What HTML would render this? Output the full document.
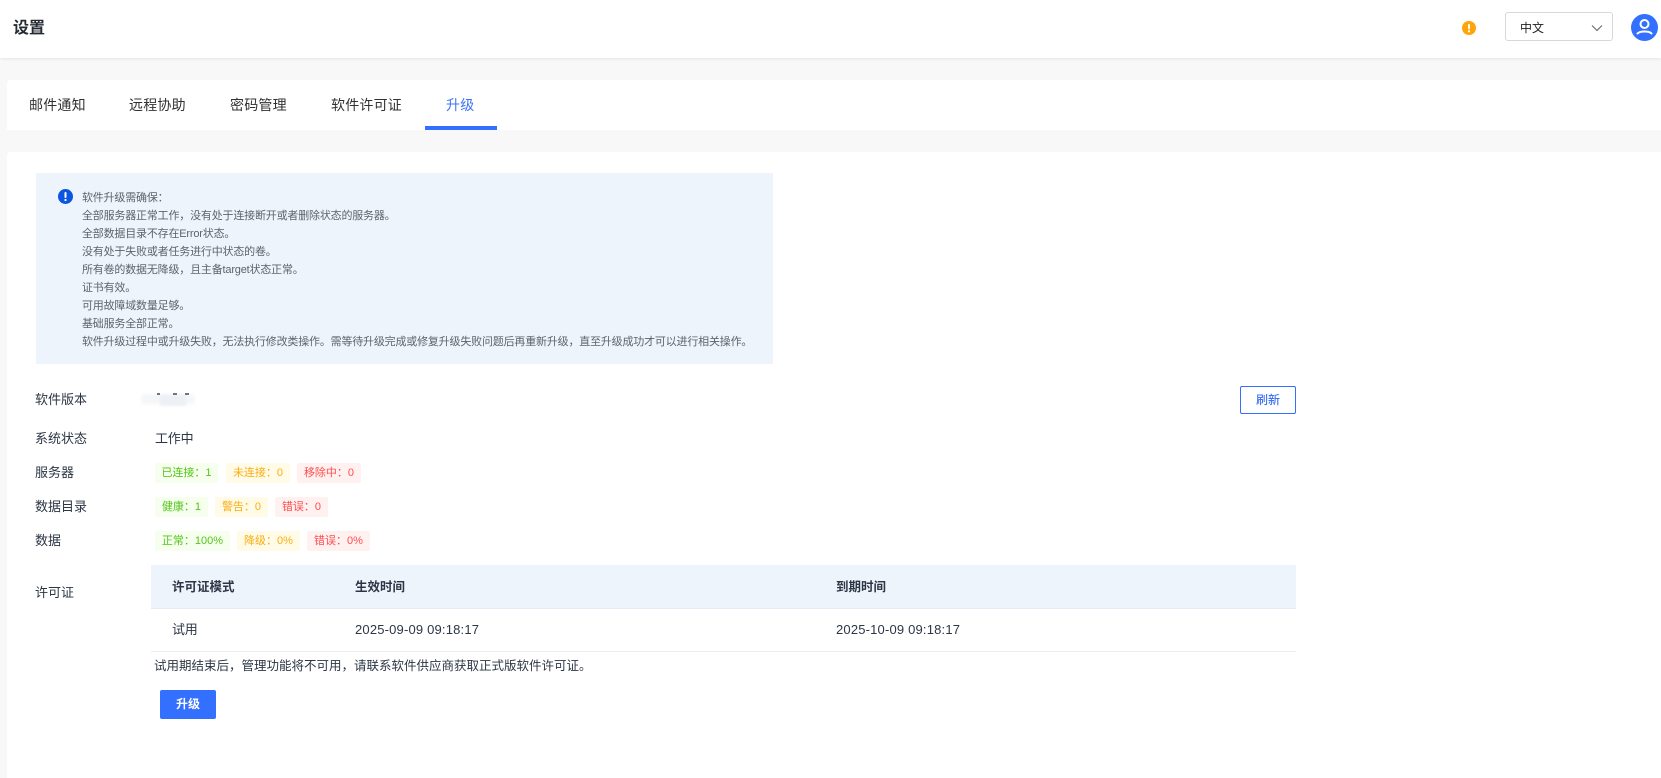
<!DOCTYPE html>
<html lang="zh">
<head>
<meta charset="utf-8">
<title>设置</title>
<style>
*{box-sizing:border-box;margin:0;padding:0}
html,body{width:1661px;height:778px;overflow:hidden;background:#f8f8f8}
body{position:relative;font-family:"Liberation Sans","Noto Sans CJK SC",sans-serif;color:#303133}
.a{position:absolute;white-space:nowrap}
.t{position:absolute;white-space:nowrap;height:20px;line-height:20px;font-size:13px;color:#2c3644}
.tab{position:absolute;white-space:nowrap;top:95px;height:20px;line-height:20px;font-size:14px;letter-spacing:.2px;color:#303133}
.tag{position:absolute;height:20px;line-height:20px;font-size:11px;text-align:center;border-radius:2px;white-space:nowrap}
.g{color:#52c41a;background:#f6ffed}
.o{color:#faad14;background:#fffbe6}
.r{color:#ff4d4f;background:#fff1f0}
.info{position:absolute;left:82px;top:189px;font-size:11px;line-height:18px;letter-spacing:-.19px;color:#5f6368;white-space:nowrap}
.h{font-size:12.5px;font-weight:700}
</style>
</head>
<body>
<div class="a" style="left:0;top:0;width:1661px;height:58px;background:#fff;box-shadow:0 1px 3px rgba(0,0,0,.08)"></div>
<div class="a" style="left:13px;top:18px;font-size:16px;line-height:22px;font-weight:700;color:#252b33">设置</div>
<svg class="a" style="left:1462px;top:21px" width="14" height="14" viewBox="0 0 14 14"><circle cx="7" cy="7" r="7" fill="#ffa40a"/><rect x="6" y="3" width="2" height="5.4" rx="1" fill="#fff"/><circle cx="7" cy="10.3" r="1.1" fill="#fff"/></svg>
<div class="a" style="left:1505px;top:12px;width:108px;height:29px;border:1px solid #d8d8d8;border-radius:3px;background:#fff"></div>
<div class="a" style="left:1520px;top:18px;font-size:12px;line-height:20px;color:#1f1f1f">中文</div>
<svg class="a" style="left:1591px;top:24px" width="12" height="8" viewBox="0 0 12 8"><path d="M1 1.5L6 6.5L11 1.5" fill="none" stroke="#666" stroke-width="1.1"/></svg>
<svg class="a" style="left:1631px;top:14px" width="27" height="27" viewBox="0 0 27 27"><circle cx="13.5" cy="13.5" r="13.5" fill="#3370ff"/><circle cx="13.5" cy="10" r="4" fill="none" stroke="#fff" stroke-width="2"/><path d="M6.5 19.5C9 16.8 18 16.8 20.5 19.5" fill="none" stroke="#fff" stroke-width="2" stroke-linecap="round"/></svg>

<div class="a" style="left:7px;top:80px;width:1654px;height:50px;background:#fff;border-radius:4px 0 0 0"></div>
<div class="tab" style="left:29px">邮件通知</div>
<div class="tab" style="left:129px">远程协助</div>
<div class="tab" style="left:230px">密码管理</div>
<div class="tab" style="left:331px">软件许可证</div>
<div class="tab" style="left:446px;color:#3f74f5">升级</div>
<div class="a" style="left:425px;top:126px;width:72px;height:4px;background:#3370ff"></div>

<div class="a" style="left:7px;top:152px;width:1654px;height:626px;background:#fff;border-radius:4px 0 0 0"></div>
<div class="a" style="left:36px;top:173px;width:737px;height:191px;background:#edf4fc"></div>
<svg class="a" style="left:58px;top:189px" width="15" height="15" viewBox="0 0 15 15"><circle cx="7.5" cy="7.5" r="7.5" fill="#0b55e0"/><rect x="6.5" y="3" width="2" height="6" rx="1" fill="#fff"/><circle cx="7.5" cy="11" r="1.1" fill="#fff"/></svg>
<div class="info">软件升级需确保：<br>全部服务器正常工作，没有处于连接断开或者删除状态的服务器。<br>全部数据目录不存在Error状态。<br>没有处于失败或者任务进行中状态的卷。<br>所有卷的数据无降级，且主备target状态正常。<br>证书有效。<br>可用故障域数量足够。<br>基础服务全部正常。<br>软件升级过程中或升级失败，无法执行修改类操作。需等待升级完成或修复升级失败问题后再重新升级，直至升级成功才可以进行相关操作。</div>

<div class="t" style="left:35px;top:390px">软件版本</div>
<div class="a" style="left:141px;top:394px;width:54px;height:10px;background:#f5f6f8;border-radius:4px;filter:blur(1.5px)"></div>
<div class="a" style="left:160px;top:395px;width:26px;height:11px;background:#eef0f5;filter:blur(1px)"></div>
<div class="a" style="left:157px;top:393px;width:3px;height:2px;background:#6d7483"></div>
<div class="a" style="left:173px;top:393px;width:4px;height:2px;background:#6d7483"></div>
<div class="a" style="left:185px;top:393px;width:4px;height:2px;background:#6d7483"></div>
<div class="a" style="left:1240px;top:386px;width:56px;height:28px;border:1px solid #3370ff;border-radius:2px;background:#fff;color:#3f74f5;font-size:12px;line-height:26px;text-align:center;font-weight:500">刷新</div>

<div class="t" style="left:35px;top:429px">系统状态</div>
<div class="t" style="left:155px;top:429px;letter-spacing:-.2px">工作中</div>

<div class="t" style="left:35px;top:463px">服务器</div>
<div class="tag g" style="left:155px;top:463px;width:63px">已连接：1</div>
<div class="tag o" style="left:226px;top:463px;width:64px">未连接：0</div>
<div class="tag r" style="left:297px;top:463px;width:64px">移除中：0</div>

<div class="t" style="left:35px;top:497px">数据目录</div>
<div class="tag g" style="left:155px;top:497px;width:53px">健康：1</div>
<div class="tag o" style="left:215px;top:497px;width:53px">警告：0</div>
<div class="tag r" style="left:275px;top:497px;width:53px">错误：0</div>

<div class="t" style="left:35px;top:531px">数据</div>
<div class="tag g" style="left:155px;top:531px;width:75px">正常：100%</div>
<div class="tag o" style="left:237px;top:531px;width:63px">降级：0%</div>
<div class="tag r" style="left:307px;top:531px;width:63px">错误：0%</div>

<div class="t" style="left:35px;top:583px">许可证</div>
<div class="a" style="left:151px;top:565px;width:1145px;height:44px;background:#edf4fc;border-bottom:1px solid #e6ebf3"></div>
<div class="t h" style="left:172px;top:577px">许可证模式</div>
<div class="t h" style="left:355px;top:577px">生效时间</div>
<div class="t h" style="left:836px;top:577px">到期时间</div>
<div class="a" style="left:151px;top:651px;width:1145px;height:1px;background:#ebeef5"></div>
<div class="t" style="left:172px;top:620px;letter-spacing:-.2px">试用</div>
<div class="t" style="left:355px;top:620px;letter-spacing:.18px">2025-09-09 09:18:17</div>
<div class="t" style="left:836px;top:620px;letter-spacing:.18px">2025-10-09 09:18:17</div>
<div class="t" style="left:154px;top:656px;font-size:12.5px">试用期结束后，管理功能将不可用，请联系软件供应商获取正式版软件许可证。</div>
<div class="a" style="left:160px;top:690px;width:56px;height:29px;background:#3370ff;border-radius:2px;color:#fff;font-size:12px;line-height:29px;text-align:center;font-weight:700">升级</div>
</body>
</html>
